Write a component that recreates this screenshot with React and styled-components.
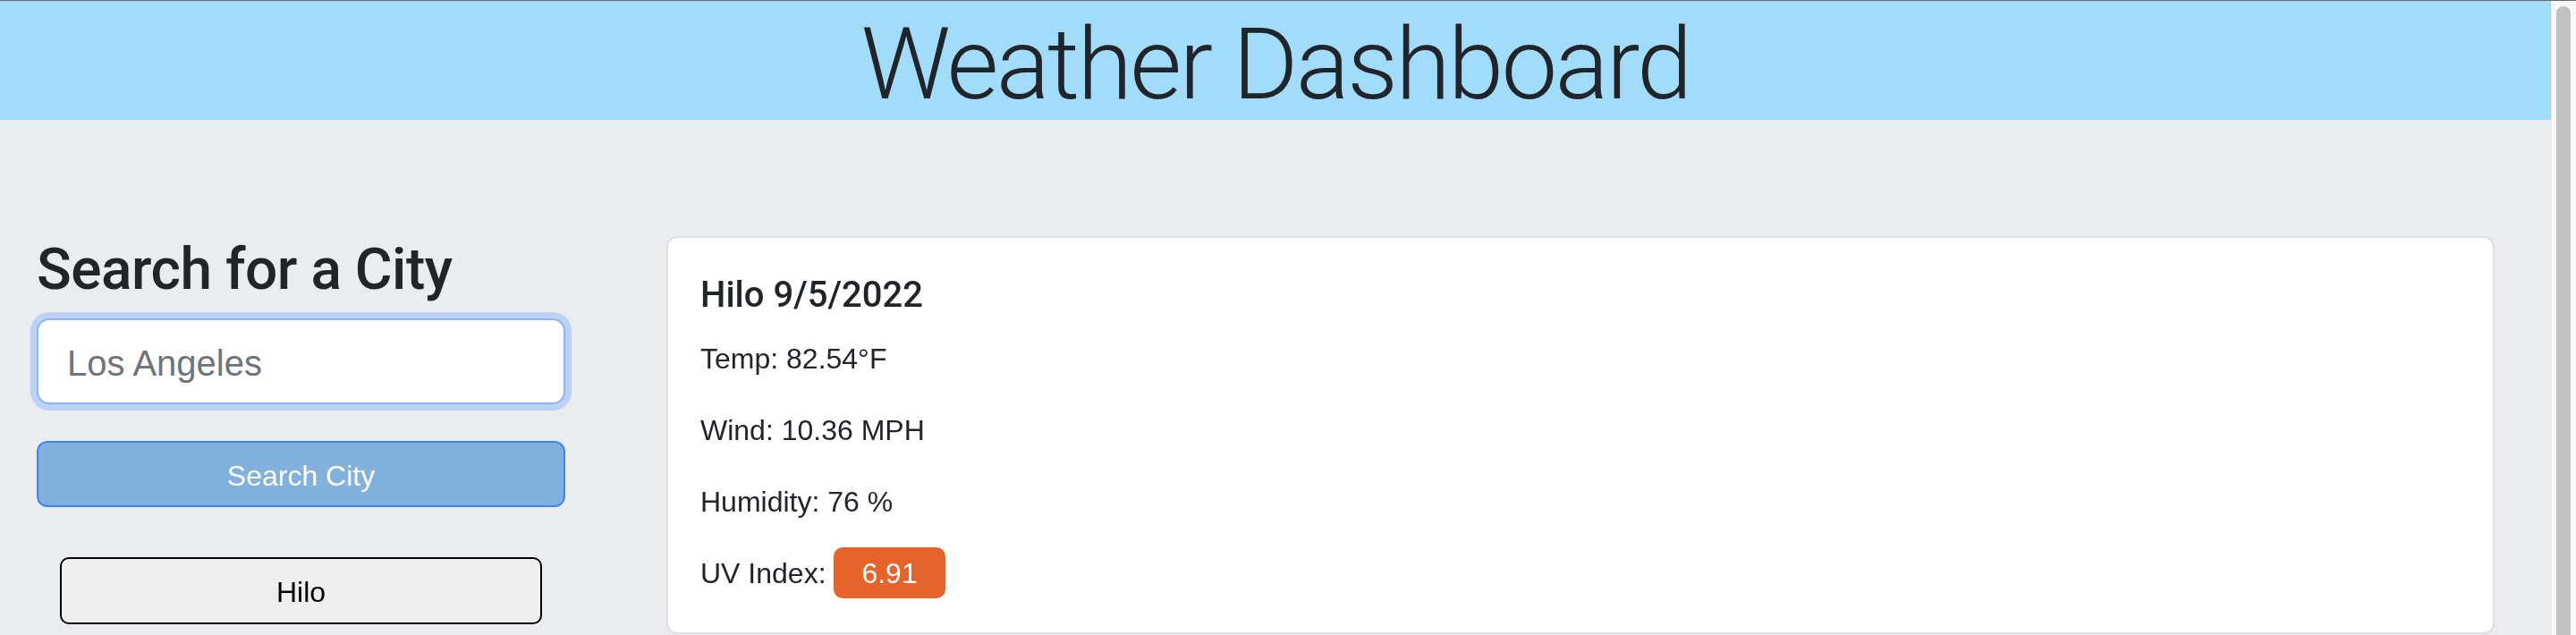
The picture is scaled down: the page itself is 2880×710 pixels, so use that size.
import React, { useState } from 'react'
import styled, { createGlobalStyle } from 'styled-components'

const GlobalStyle = createGlobalStyle`
  html, body {
    margin: 0;
    padding: 0;
  }
  body {
    font-family: "Liberation Sans", Arial, sans-serif;
    color: #212529;
    background: #ebecf0;
  }
  * {
    box-sizing: border-box;
  }
`

const current = {
  city: 'Hilo',
  date: '9/5/2022',
  temp: 82.54,
  wind: 10.36,
  humidity: 76,
  uv: 6.91,
}

const uvColor = (uv) => {
  if (uv < 3) return '#3aa457'
  if (uv < 6) return '#e3b21c'
  if (uv < 8) return '#e6642c'
  return '#d2302f'
}

export default function App() {
  const [city, setCity] = useState('')
  const [history] = useState(['Hilo'])

  const cityHandler = (e) => {
    setCity(e.target.value)
  }

  return (
    <>
      <GlobalStyle />
      <Frame>
        <Page>
          <Header>
            <Title>Weather Dashboard</Title>
          </Header>
          <Main>
            <SearchPanel>
              <PanelHeading>Search for a City</PanelHeading>
              <CityInput placeholder="Los Angeles" value={city} onChange={cityHandler} autoFocus />
              <SearchButton>Search City</SearchButton>
              {history.map((name) => (
                <HistoryButton key={name}>{name}</HistoryButton>
              ))}
            </SearchPanel>
            <CurrentCard>
              <CardTitle>
                {current.city} {current.date}
              </CardTitle>
              <Stat>Temp: {current.temp}°F</Stat>
              <Stat>Wind: {current.wind} MPH</Stat>
              <Stat>Humidity: {current.humidity} %</Stat>
              <Stat>
                UV Index: <UvBadge $color={uvColor(current.uv)}>{current.uv}</UvBadge>
              </Stat>
            </CurrentCard>
          </Main>
        </Page>
        <ScrollTrack>
          <ScrollThumb />
        </ScrollTrack>
      </Frame>
    </>
  )
}

const Frame = styled.div`
  display: flex;
  height: 100vh;
  border-top: 1px solid #66686b;
  overflow: hidden;
`

const Page = styled.div`
  flex: 1;
  min-width: 0;
  background: #ebecf0;
`

const Header = styled.header`
  height: 133px;
  background: #a1ddfa;
  display: flex;
  justify-content: center;
  padding-top: 4px;
`

const Title = styled.h1`
  margin: 0;
  font-family: Roboto, "Liberation Sans", sans-serif;
  font-weight: 300;
  font-size: 112px;
  line-height: 1.2;
  letter-spacing: -2.7px;
  color: #212529;
`

const Main = styled.main`
  display: flex;
  align-items: flex-start;
  gap: 113px;
  padding: 130px 63px 0 41px;
`

const SearchPanel = styled.section`
  width: 591px;
  flex-shrink: 0;
  display: flex;
  flex-direction: column;
`

const PanelHeading = styled.h2`
  margin: 0 0 15px;
  font-family: Roboto, "Liberation Sans", sans-serif;
  font-weight: 500;
  font-size: 64px;
  line-height: 1.2;
  letter-spacing: -0.5px;
`

const CityInput = styled.input`
  height: 96px;
  padding: 6px 32px 0;
  font-family: "Liberation Sans", Arial, sans-serif;
  font-size: 40px;
  color: #212529;
  background: #fff;
  border: 2px solid #86b7fe;
  border-radius: 14px;
  box-shadow: 0 0 0 7px #bdd1f4;
  outline: none;
  caret-color: #000;

  &::placeholder {
    color: #6f7479;
  }
`

const SearchButton = styled.button`
  margin-top: 41px;
  height: 74px;
  padding: 5px 0 0;
  font-family: "Liberation Sans", Arial, sans-serif;
  font-size: 32px;
  color: #fff;
  background: #83b1de;
  border: 2px solid #3b86f6;
  border-radius: 12px;
`

const HistoryButton = styled.button`
  align-self: center;
  width: 539px;
  height: 75px;
  margin-top: 56px;
  padding: 5px 0 0;
  font-family: "Liberation Sans", Arial, sans-serif;
  font-size: 32px;
  color: #000;
  background: #efeff0;
  border: 2px solid #000;
  border-radius: 10px;
`

const CurrentCard = styled.section`
  flex: 1;
  background: #fff;
  border: 2px solid #dfe0e3;
  border-radius: 12px;
  padding: 40px 36px 10px;
`

const CardTitle = styled.h5`
  margin: 0 0 23px;
  font-family: Roboto, "Liberation Sans", sans-serif;
  font-weight: 500;
  font-size: 40px;
  line-height: 48px;
`

const Stat = styled.p`
  margin: 0 0 32px;
  font-size: 32px;
  line-height: 48px;
`

const UvBadge = styled.span`
  display: inline-block;
  margin: -5px 0 -4px;
  padding: 5px 31px 4px;
  line-height: 48px;
  color: #fff;
  background: ${(p) => p.$color};
  border-radius: 10px;
`

const ScrollTrack = styled.div`
  width: 28px;
  flex-shrink: 0;
  display: flex;
  flex-direction: column;
  padding: 6px 6px 0 5px;
  background: #f8f8f8;
  border-left: 1px solid #ededed;
`

const ScrollThumb = styled.div`
  flex: 1;
  margin-bottom: -10px;
  background: #c1c1c1;
  border-radius: 8px;
`
